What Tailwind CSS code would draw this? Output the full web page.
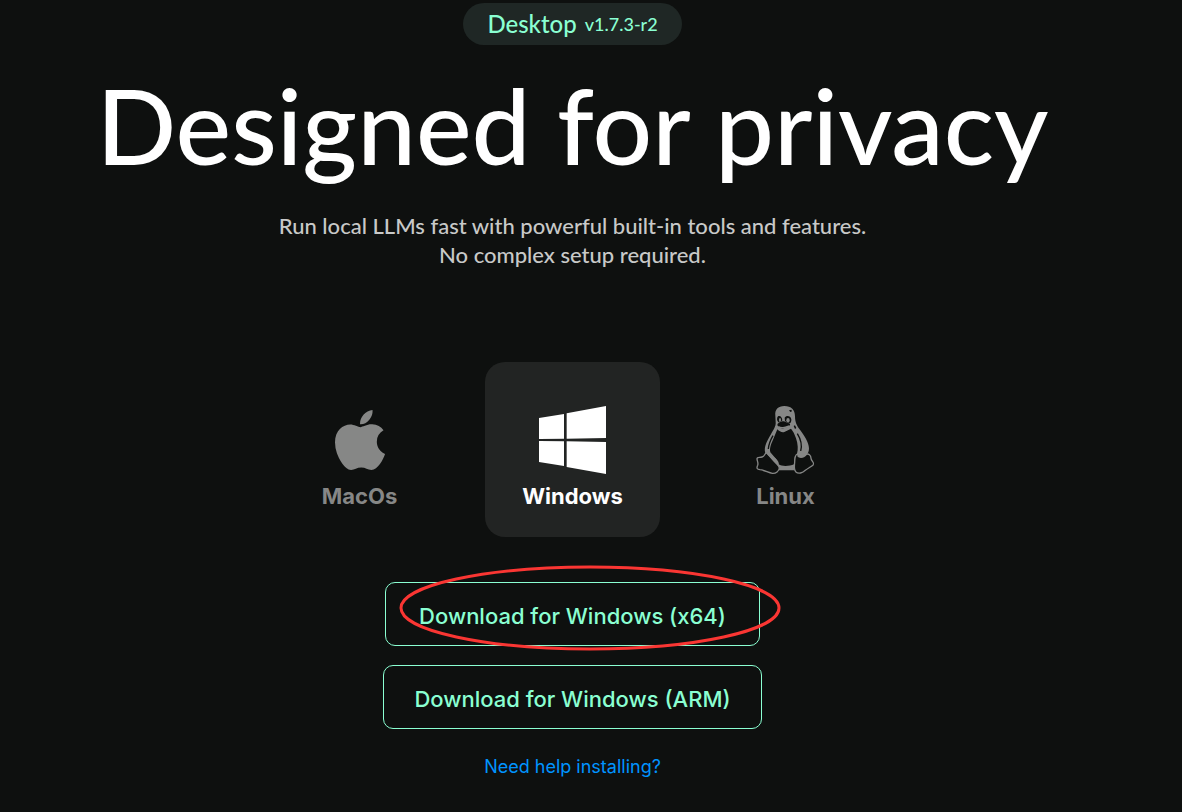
<!DOCTYPE html>
<html lang="en">
  <head>
    <meta charset="UTF-8" />
    <meta name="viewport" content="width=device-width, initial-scale=1.0" />
    <title>Designed for privacy</title>
    <script src="https://cdn.jsdelivr.net/npm/@tailwindcss/browser@4"></script>
  </head>
  <body class="min-h-screen bg-[#0e100f] font-['Lato',sans-serif] text-white">
    <main class="flex flex-col items-center pt-[3px] pr-[37px] pb-8 text-center">
      <!-- Version -->
      <div class="flex h-[42px] items-center gap-2 rounded-full bg-[#1f2725] px-6 font-medium text-[#8affd2]">
        <span class="text-[24px] leading-8">Desktop</span>
        <span class="text-[18px] leading-8">v1.7.3-r2</span>
      </div>

      <!-- Heading -->
      <h1 class="mt-[14px] text-[105px] leading-[130px] font-medium whitespace-nowrap">Designed for privacy</h1>
      <p class="mt-[22px] text-[22px] leading-[29px] font-medium text-[#c8c9c8]">
        Run local LLMs fast with powerful built-in tools and features.<br />
        No complex setup required.
      </p>

      <!-- Platforms -->
      <div class="mt-[93px] flex gap-[38px] font-['Inter',sans-serif] text-[22px] leading-8 font-bold">
        <button type="button" class="flex size-[175px] flex-col items-center justify-end rounded-[20px] pb-[25px] text-[#868786]">
          <svg class="mb-[10px] h-[60px] w-[50px]" viewBox="4 32 376 448" fill="currentColor" preserveAspectRatio="none" aria-hidden="true">
            <path d="M318.7 268.7c-.2-36.7 16.4-64.4 50-84.8-18.8-26.9-47.2-41.7-84.7-44.6-35.5-2.8-74.3 20.7-88.5 20.7-15 0-49.4-19.7-76.4-19.7C63.3 141.2 4 184.8 4 273.5q0 39.3 14.4 81.2c12.8 36.7 59 126.7 107.2 125.2 25.2-.6 43-17.9 75.8-17.9 31.8 0 48.3 17.9 76.4 17.9 48.6-.7 90.4-82.5 102.6-119.3-65.2-30.7-61.7-90-61.7-91.9zm-56.6-164.2c27.3-32.4 24.8-61.9 24-72.5-24.1 1.4-52 16.4-67.9 34.9-17.5 19.8-27.8 44.3-25.6 71.9 26.1 2 49.9-11.4 69.5-34.3z" />
          </svg>
          MacOs
        </button>
        <button type="button" class="flex size-[175px] flex-col items-center justify-end rounded-[20px] bg-[#222423] pb-[25px] text-white">
          <svg class="mb-[6px] h-[68px] w-[67px]" viewBox="192 168 201 204" fill="currentColor" aria-hidden="true">
            <path d="M192 204L267 192V266L192 267ZM275 190L393 168V264L275 266ZM192 273L267 274V348L192 336ZM275 274L393 276V372L275 351Z" />
          </svg>
          Windows
        </button>
        <button type="button" class="flex size-[175px] flex-col items-center justify-end rounded-[20px] pb-[25px] text-[#868786]">
          <svg class="mb-[5px] h-[70px] w-[60px]" viewBox="47 30 180 210" fill="currentColor" aria-hidden="true">
            <!-- head and body -->
            <path d="M105 62C103 44 113 33 132 33C153 33 164 45 164 64C164 82 169 92 180 106C193 124 205 142 206 160C206 170 203 176 198 180L165 226H112L75 174C69 155 82 135 91 119C100 104 107 94 106 82Z" />
            <path class="fill-[#0e100f]" d="M111 103C117 109 124 113 132 111L152 101C158 108 163 117 167 130C173 148 174 164 170 176L163 185L161 208C148 214 124 215 115 208L108 193L90 172C86 155 97 139 103 122Z" />
            <path fill="none" class="stroke-[#0e100f]" stroke-width="4" d="M171 116C181 132 186 150 181 168M98 122C90 136 85 146 84 162" />
            <!-- face -->
            <path class="fill-[#0e100f]" d="M113 64C119 60 125 66 126 76L120 82L114 82C109 76 109 69 113 64ZM133 68C138 60 151 62 153 73C154 82 149 87 144 86L134 78Z" />
            <ellipse cx="119" cy="75" rx="3" ry="6" />
            <ellipse cx="143" cy="76" rx="5" ry="7" />
            <path class="fill-[#0e100f]" d="M112 86C119 80 125 77 131 79L149 87C151 91 145 94 139 96C131 101 121 102 116 96C112 93 110 90 112 86Z" />
            <path fill="none" stroke="currentColor" stroke-width="4" d="M114 95C123 101 132 98 147 93M117 103C126 109 138 106 147 99" />
            <path class="fill-[#0e100f]" d="M146 46l7-2 2 5-5 2zM160 93l4-2 4 8-4 3z" />
            <!-- feet -->
            <path class="fill-[#0e100f] stroke-current" stroke-width="4" stroke-linejoin="round" d="M78 173C73 176 73 184 65 186C57 188 50 186 50 191C50 199 55 203 52 211C48 220 50 223 59 224C72 225 84 233 96 235C107 236 116 228 117 219C117 211 108 207 104 201Z" />
            <path d="M76 172C86 168 92 179 101 187C110 193 119 203 114 211C106 206 98 198 92 190Z" />
            <path class="fill-[#0e100f] stroke-current" stroke-width="4" stroke-linejoin="round" d="M171 177C164 180 163 190 163 202C162 215 160 223 166 230C174 238 187 234 195 226C203 219 213 215 219 209C224 203 213 199 212 190C212 181 204 175 198 178C190 184 178 184 171 177Z" />
            <path d="M171 176C176 164 194 166 201 177C194 190 177 192 171 184Z" />
          </svg>
          Linux
        </button>
      </div>

      <!-- Downloads -->
      <div class="mt-[45px] flex flex-col items-center gap-[19px] font-['Inter',sans-serif] text-[22px] leading-8 font-medium text-[#8affd2]">
        <div class="relative">
          <button type="button" class="h-16 w-[375px] rounded-[10px] border border-[#8affd2] pt-1 whitespace-nowrap">Download for Windows (x64)</button>
          <svg class="pointer-events-none absolute -top-[17px] left-[14px] h-[86px] w-[382px]" viewBox="0 0 382 86" fill="none" aria-hidden="true">
            <ellipse cx="191" cy="43" rx="189" ry="41" stroke="#fa3633" stroke-width="3" />
          </svg>
        </div>
        <button type="button" class="h-16 w-[379px] rounded-[10px] border border-[#8affd2] pt-1 whitespace-nowrap">Download for Windows (ARM)</button>
      </div>
      <a href="#help" class="mt-6 font-['Inter',sans-serif] text-[18px] leading-7 text-[#0094ff]">Need help installing?</a>
    </main>
  </body>
</html>
